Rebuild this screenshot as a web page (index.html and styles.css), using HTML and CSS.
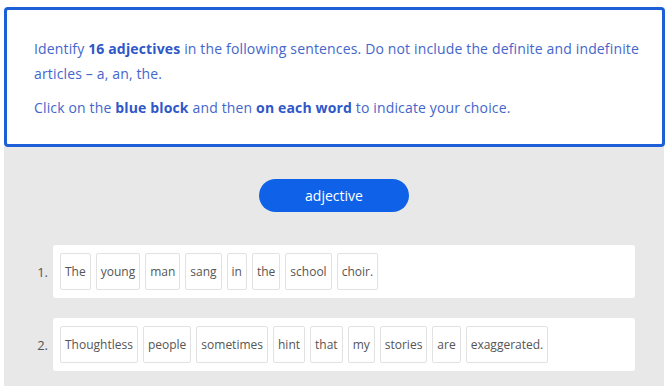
FILE: index.html
```html
<!DOCTYPE html>
<html lang="en">
<head>
    <meta charset="UTF-8">
    <meta name="viewport" content="width=device-width, initial-scale=1.0">
    <title>Identify adjectives</title>
    <link rel="stylesheet" href="styles.css">
</head>
<body>
<div class="page">
    <div class="intro">
        <p>Identify <b>16 adjectives</b> in the following sentences. Do not include the definite and indefinite articles – a, an, the.</p>
        <p>Click on the <b>blue block</b> and then <b>on each word</b> to indicate your choice.</p>
    </div>

    <div class="work">
        <div class="tools">
            <button type="button" class="tag">adjective</button>
        </div>

        <div class="item">
            <span class="num">1.</span>
            <div class="sentence">
                <span class="word">The</span>
                <span class="word">young</span>
                <span class="word">man</span>
                <span class="word">sang</span>
                <span class="word">in</span>
                <span class="word">the</span>
                <span class="word">school</span>
                <span class="word">choir.</span>
            </div>
        </div>

        <div class="item">
            <span class="num">2.</span>
            <div class="sentence">
                <span class="word">Thoughtless</span>
                <span class="word">people</span>
                <span class="word">sometimes</span>
                <span class="word">hint</span>
                <span class="word">that</span>
                <span class="word">my</span>
                <span class="word">stories</span>
                <span class="word">are</span>
                <span class="word">exaggerated.</span>
            </div>
        </div>
    </div>
</div>
</body>
</html>
```

FILE: styles.css
```css
body {
    font-family: 'Open Sans', sans-serif;
    background-color: #ffffff;
    margin: 0;
    padding: 0;
}

.page {
    width: 661px;
    margin: 7px 0 0 4px;
}

.intro {
    border: 3px solid #1d5fd6;
    border-radius: 4px;
    background-color: #ffffff;
    padding: 26px 20px 24px 27px;
}

.intro p {
    margin: 0;
    color: #4466cc;
    font-size: 14px;
    letter-spacing: 0.15px;
    line-height: 25px;
}

.intro p + p {
    margin-top: 9px;
}

.intro b {
    color: #2f57c8;
    font-weight: 700;
}

.work {
    width: 660px;
    background-color: #e8e8e8;
    padding: 32px 0 20px;
}

.tools {
    display: flex;
    justify-content: center;
    margin-bottom: 33px;
}

.tag {
    width: 150px;
    height: 33px;
    border: none;
    border-radius: 17px;
    background-color: #0f62e8;
    color: #ffffff;
    font-family: 'Open Sans', sans-serif;
    font-size: 14px;
    cursor: pointer;
}

.item {
    display: flex;
    align-items: center;
    margin-bottom: 20px;
    padding-right: 29px;
}

.num {
    width: 44px;
    text-align: right;
    padding-right: 5px;
    color: #555555;
    font-size: 13px;
}

.sentence {
    flex: 1;
    display: flex;
    gap: 5px;
    padding: 8px 7px;
    background-color: #ffffff;
    border-radius: 3px;
}

.word {
    display: flex;
    align-items: center;
    height: 37px;
    box-sizing: border-box;
    padding: 0 4px;
    border: 1px solid #e2e2e2;
    border-radius: 2px;
    color: #555555;
    font-size: 12px;
    cursor: pointer;
}
```
